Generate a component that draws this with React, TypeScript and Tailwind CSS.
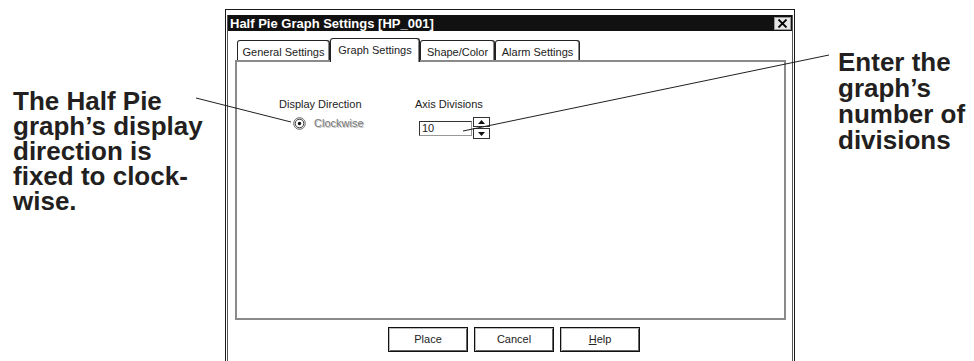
const Tab = ({ label, width, active }: { label: string; width: number; active?: boolean }) => {
  const w = width === 93 ? "w-[93px]" : width === 90 ? "w-[90px]" : width === 75 ? "w-[75px]" : "w-[85px]";
  return (
    <div
      className={
        active
          ? `${w} h-[24px] -mb-[2px] flex items-center justify-center bg-white border-t border-x border-[#222] rounded-t-[3px] shadow-[inset_-1px_0_0_#888] relative z-10`
          : `${w} h-[20px] pt-[4px] flex items-center justify-center bg-white border-t border-x border-[#222] rounded-t-[3px] shadow-[inset_-1px_0_0_#888]`
      }
    >
      {label}
    </div>
  );
};

const WinButton = ({ children }: { children: React.ReactNode }) => (
  <button className="w-[80px] h-[25px] flex items-center justify-center border border-[#111] bg-white shadow-[inset_1px_1px_0_#bbb,inset_-1px_-1px_0_#666] text-[11px] leading-none">
    {children}
  </button>
);

const Dialog = () => (
  <div className="mt-[9px] w-[570px] h-[360px] shrink-0 border border-b-0 border-[#1a1a1a] px-px pt-[5px]">
    <div className="h-full border-x border-[#555]">
      {/* title bar */}
      <div className="h-[16px] bg-[#111] flex items-center justify-between pl-[2px] pr-[1px]">
        <span className="text-white text-[13px] font-bold leading-none">Half Pie Graph Settings [HP_001]</span>
        <div className="w-[17px] h-[13px] bg-[#e6e6e6] border border-[#999] flex items-center justify-center">
          <svg width="11" height="9" viewBox="0 0 11 9">
            <path d="M1.5 0.5 L9.5 8.5 M9.5 0.5 L1.5 8.5" stroke="#000" strokeWidth="1.8" />
          </svg>
        </div>
      </div>

      <div className="pt-[7px] pl-[7px] pr-[6px] text-[11px] text-[#222]">
        {/* tabs */}
        <div className="flex items-end h-[22px] pl-[2px]">
          <Tab label="General Settings" width={93} />
          <Tab label="Graph Settings" width={90} active />
          <Tab label="Shape/Color" width={75} />
          <Tab label="Alarm Settings" width={85} />
        </div>

        {/* tab panel */}
        <div className="h-[260px] border-2 border-[#8a8a8a] pt-[35px] pl-[42px] flex">
          <div className="w-[136px] shrink-0">
            <div className="leading-[14px]">Display Direction</div>
            <div className="mt-[4px] h-[16px] flex items-center pl-[14px] gap-[8px]">
              <svg width="13" height="13" viewBox="0 0 13 13">
                <circle cx="6.5" cy="6.5" r="5.8" fill="#fff" stroke="#666" strokeWidth="1" />
                <circle cx="6.5" cy="6.5" r="4.3" fill="none" stroke="#333" strokeWidth="1" />
                <circle cx="6.5" cy="6.5" r="1.7" fill="#111" />
              </svg>
              <span className="text-[#7a7a7a] [text-shadow:1px_1px_0_#c4c4c4] leading-none">Clockwise</span>
            </div>
          </div>
          <div>
            <div className="leading-[14px]">Axis Divisions</div>
            <div className="mt-[6px] pl-[4px] flex items-center">
              <div className="w-[53px] h-[15px] border-t border-l border-[#333] border-b border-r border-b-[#999] border-r-[#999] pl-[2px] flex items-center leading-none">
                10
              </div>
              <div className="w-[17px] h-[22px] ml-px flex flex-col gap-px">
                <div className="h-[10px] border border-[#333] flex items-center justify-center bg-white">
                  <svg width="7" height="4" viewBox="0 0 7 4"><path d="M0 4 L3.5 0 L7 4 Z" fill="#111" /></svg>
                </div>
                <div className="h-[11px] border border-[#333] flex items-center justify-center bg-white">
                  <svg width="7" height="4" viewBox="0 0 7 4"><path d="M0 0 L3.5 4 L7 0 Z" fill="#111" /></svg>
                </div>
              </div>
            </div>
          </div>
        </div>

        {/* buttons */}
        <div className="pt-[7px] pl-[153px] flex gap-[6px]">
          <WinButton>Place</WinButton>
          <WinButton>Cancel</WinButton>
          <WinButton>
            <span className="underline">H</span>elp
          </WinButton>
        </div>
      </div>
    </div>
  </div>
);

export default function App() {
  return (
    <div className="relative flex w-[974px] h-[361px] overflow-hidden bg-white font-['Liberation_Sans',Arial,sans-serif] text-[#231f20]">
      <div className="w-[225px] shrink-0 pl-[13px] pt-[89px] text-[26px] leading-[25px] font-bold">
        The Half Pie
        <br />
        graph’s display
        <br />
        direction is
        <br />
        fixed to clock-
        <br />
        wise.
      </div>

      <Dialog />

      <div className="flex-1 pl-[43px] pt-[49px] text-[26px] leading-[26px] font-bold">
        Enter the
        <br />
        graph’s
        <br />
        number of
        <br />
        divisions
      </div>

      <svg className="absolute inset-0 pointer-events-none" width="974" height="361">
        <line x1="196" y1="98" x2="291" y2="122" stroke="#231f20" strokeWidth="1" />
        <line x1="829" y1="55" x2="463" y2="131" stroke="#231f20" strokeWidth="1" />
      </svg>
    </div>
  );
}
